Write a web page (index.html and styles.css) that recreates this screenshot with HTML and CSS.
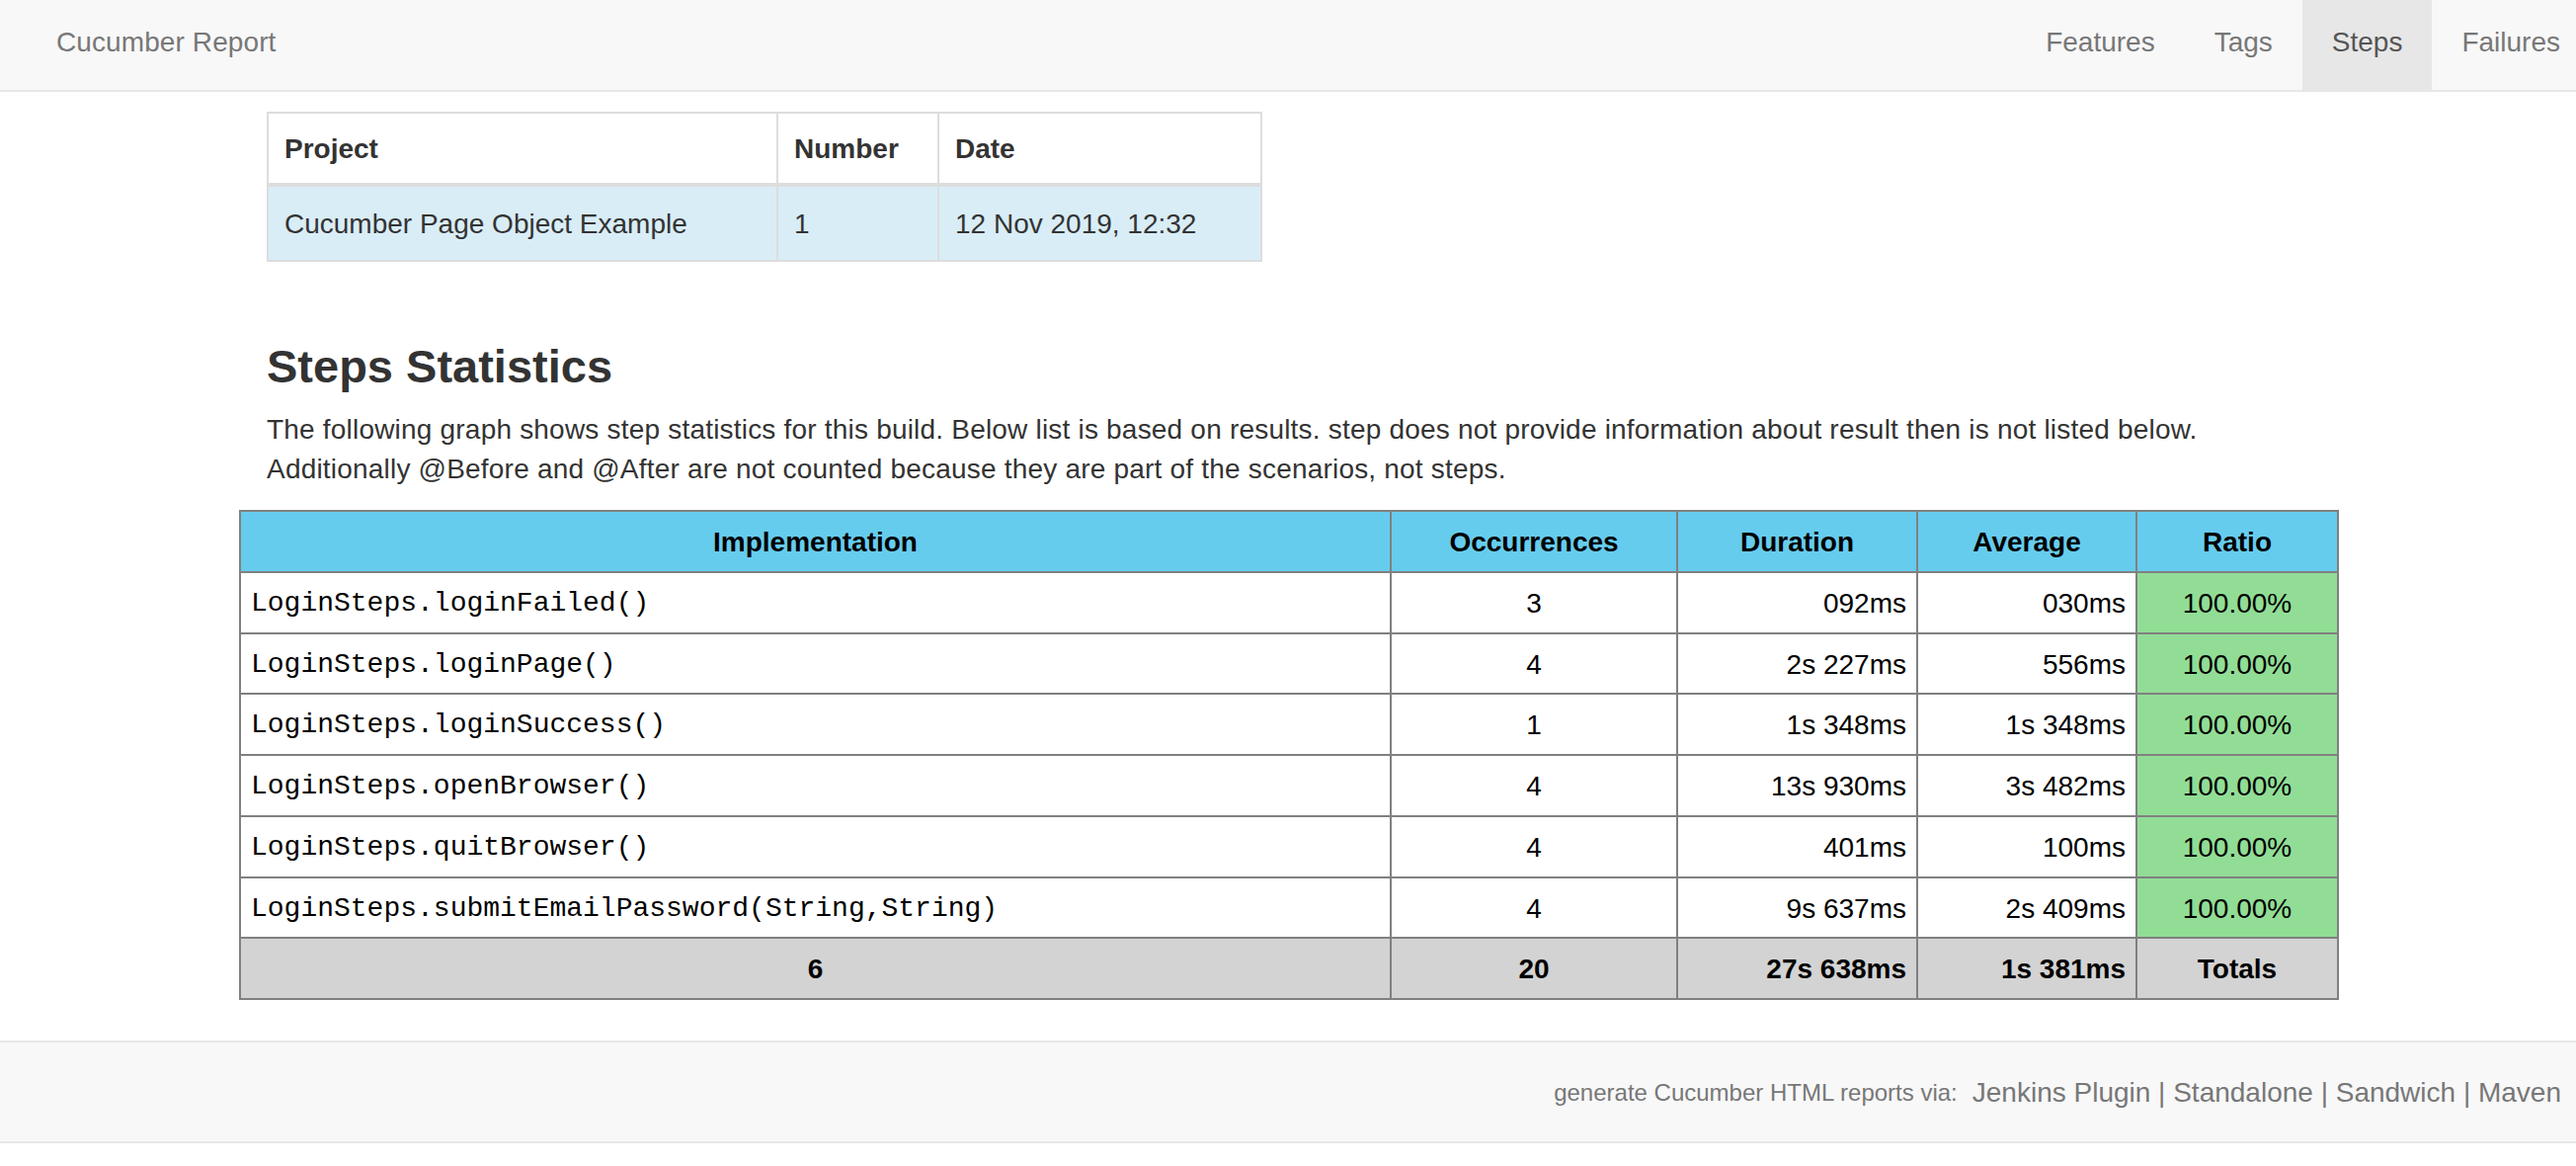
FILE: index.html
```html
<!DOCTYPE html>
<html lang="en">
<head>
<meta charset="utf-8">
<title>Cucumber Report - Steps</title>
<link rel="stylesheet" href="styles.css">
</head>
<body>
<nav class="navbar">
  <a class="brand" href="#">Cucumber Report</a>
  <ul class="nav">
    <li><a href="#">Features</a></li>
    <li><a href="#">Tags</a></li>
    <li class="active"><a href="#">Steps</a></li>
    <li><a href="#">Failures</a></li>
  </ul>
</nav>

<main class="container">
  <div class="content">
    <table class="build-table">
      <thead>
        <tr><th class="c-project">Project</th><th class="c-number">Number</th><th class="c-date">Date</th></tr>
      </thead>
      <tbody>
        <tr><td>Cucumber Page Object Example</td><td>1</td><td>12 Nov 2019, 12:32</td></tr>
      </tbody>
    </table>

    <h2 class="title">Steps Statistics</h2>
    <p class="intro">The following graph shows step statistics for this build. Below list is based on results. step does not provide information about result then is not listed below.<br>Additionally @Before and @After are not counted because they are part of the scenarios, not steps.</p>
  </div>

  <table class="stats-table">
    <colgroup>
      <col class="w-impl"><col class="w-occ"><col class="w-dur"><col class="w-avg"><col class="w-ratio">
    </colgroup>
    <thead>
      <tr><th>Implementation</th><th>Occurrences</th><th>Duration</th><th>Average</th><th>Ratio</th></tr>
    </thead>
    <tbody>
      <tr><td class="location">LoginSteps.loginFailed()</td><td class="num">3</td><td class="dur">092ms</td><td class="dur">030ms</td><td class="passed">100.00%</td></tr>
      <tr><td class="location">LoginSteps.loginPage()</td><td class="num">4</td><td class="dur">2s 227ms</td><td class="dur">556ms</td><td class="passed">100.00%</td></tr>
      <tr><td class="location">LoginSteps.loginSuccess()</td><td class="num">1</td><td class="dur">1s 348ms</td><td class="dur">1s 348ms</td><td class="passed">100.00%</td></tr>
      <tr><td class="location">LoginSteps.openBrowser()</td><td class="num">4</td><td class="dur">13s 930ms</td><td class="dur">3s 482ms</td><td class="passed">100.00%</td></tr>
      <tr><td class="location">LoginSteps.quitBrowser()</td><td class="num">4</td><td class="dur">401ms</td><td class="dur">100ms</td><td class="passed">100.00%</td></tr>
      <tr><td class="location">LoginSteps.submitEmailPassword(String,String)</td><td class="num">4</td><td class="dur">9s 637ms</td><td class="dur">2s 409ms</td><td class="passed">100.00%</td></tr>
    </tbody>
    <tfoot>
      <tr><td class="num">6</td><td class="num">20</td><td class="dur">27s 638ms</td><td class="dur">1s 381ms</td><td class="num">Totals</td></tr>
    </tfoot>
  </table>
</main>

<footer class="footer">
  <span class="gen">generate Cucumber HTML reports via:</span>
  <span class="links"><a href="#">Jenkins Plugin</a> | <a href="#">Standalone</a> | <a href="#">Sandwich</a> | <a href="#">Maven</a></span>
</footer>
</body>
</html>
```

FILE: styles.css
```css
* { box-sizing: border-box; }

html, body {
  margin: 0;
  padding: 0;
  background: #fff;
  overflow-x: hidden;
}

body {
  font-family: "Liberation Sans", Arial, Helvetica, sans-serif;
  font-size: 28px;
  line-height: 40px;
  color: #333;
}

a { text-decoration: none; color: inherit; }

/* ---------- navbar ---------- */
.navbar {
  display: flex;
  justify-content: space-between;
  align-items: stretch;
  height: 93px;
  background: #f8f8f8;
  border-bottom: 2px solid #e7e7e7;
  overflow: hidden;
}

.brand {
  display: flex;
  align-items: center;
  padding-left: 57px;
  padding-bottom: 5px;
  color: #777;
  font-size: 28px;
  letter-spacing: 0.1px;
}

.nav {
  display: flex;
  list-style: none;
  margin: 0 -14px 0 0;
  padding: 0;
}

.nav li a {
  display: flex;
  align-items: center;
  height: 100%;
  padding: 0 30px 5px;
  color: #777;
}

.nav li.active a {
  background: #e7e7e7;
  color: #555;
}

/* ---------- main ---------- */
.container {
  width: 2124px;
  margin: 0 auto;
}

.content {
  padding: 0 28px;
}

.build-table {
  width: 1006px;
  margin-top: 20px;
  border-collapse: collapse;
  table-layout: fixed;
}

.build-table th,
.build-table td {
  text-align: left;
  padding: 15px 16px;
  line-height: 40px;
  border: 2px solid #ddd;
}

.build-table th {
  font-weight: bold;
  border-bottom-width: 4px;
  padding-top: 16px;
  padding-bottom: 14px;
  background: #fff;
}

.build-table td {
  background: #d9edf7;
  padding-top: 18px;
  padding-bottom: 16px;
}

.c-project { width: 516px; }
.c-number { width: 163px; }
.c-date { width: 327px; }

.title {
  margin: 80px 0 0;
  font-size: 47px;
  line-height: 52px;
  font-weight: bold;
  color: #333;
}

.intro {
  margin: 18px 0 21px;
  font-size: 28px;
  line-height: 40px;
  letter-spacing: 0.2px;
}

/* ---------- stats table ---------- */
.stats-table {
  width: 2124px;
  border-collapse: collapse;
  table-layout: fixed;
  color: #000;
}

.w-impl { width: 1165px; }
.w-occ { width: 290px; }
.w-dur { width: 243px; }
.w-avg { width: 222px; }
.w-ratio { width: 204px; }

.stats-table th,
.stats-table td {
  border: 2px solid #808080;
  padding: 11px 10px 9px;
  line-height: 39.75px;
  font-size: 28px;
  white-space: nowrap;
}

.stats-table th {
  background: #66ccee;
  font-weight: bold;
  text-align: center;
}

.stats-table td.location {
  font-family: "Courier New", "Liberation Mono", monospace;
  text-align: left;
}

.stats-table td.num { text-align: center; }
.stats-table td.dur { text-align: right; }

.stats-table td.passed {
  background: #92dd96;
  text-align: center;
}

.stats-table tfoot td {
  background: #d3d3d3;
  font-weight: bold;
}

/* ---------- footer ---------- */
.footer {
  display: flex;
  justify-content: flex-end;
  align-items: center;
  gap: 15px;
  margin-top: 41px;
  height: 104px;
  padding-right: 15px;
  padding-top: 2px;
  background: #f8f8f8;
  border-top: 2px solid #e7e7e7;
  border-bottom: 2px solid #e7e7e7;
  color: #777;
}

.gen {
  font-size: 24px;
  color: #777;
}

.links {
  font-size: 28px;
  color: #777;
}
```
